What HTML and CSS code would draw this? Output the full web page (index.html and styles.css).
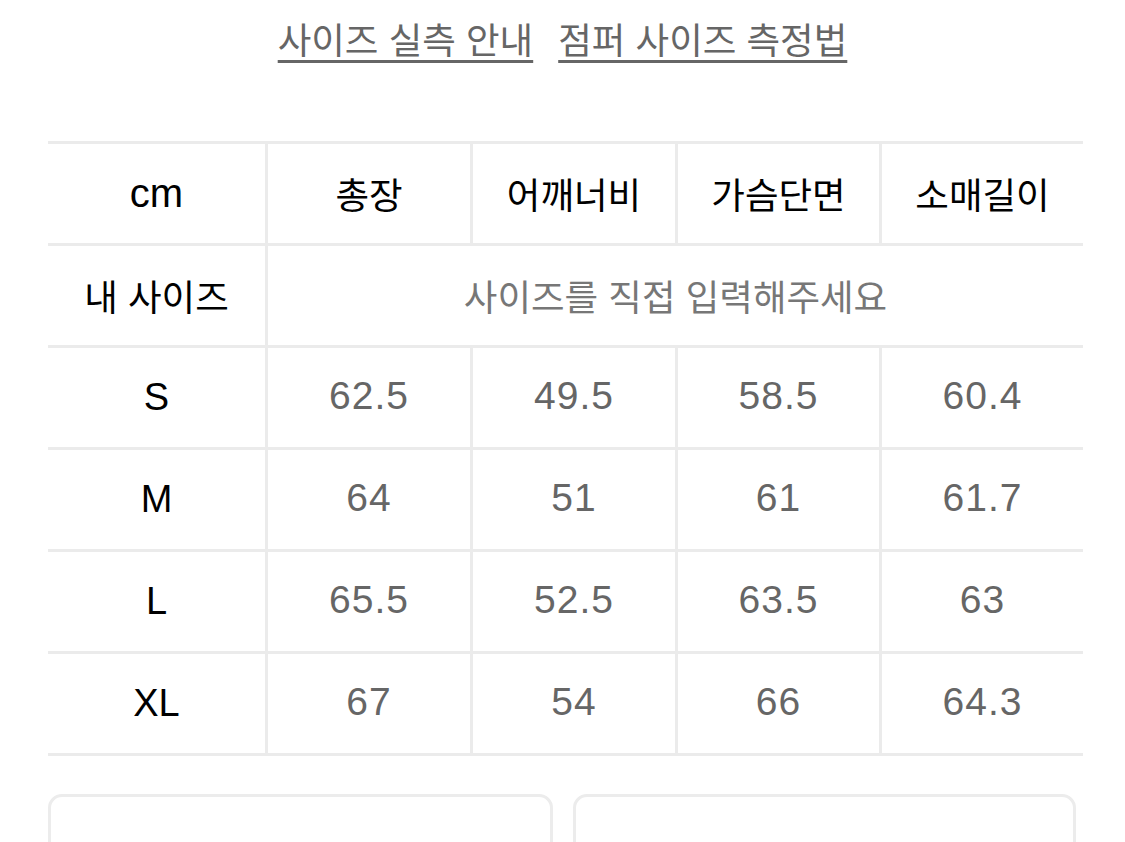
FILE: index.html
```html
<!DOCTYPE html>
<html lang="ko">
<head>
<meta charset="utf-8">
<link rel="stylesheet" href="styles.css">
</head>
<body>
<div class="page">
  <div class="links">
    <a class="link" href="#">사이즈 실측 안내</a>
    <a class="link" href="#">점퍼 사이즈 측정법</a>
  </div>
  <div class="table">
    <div class="cell label en">cm</div>
    <div class="cell head">총장</div>
    <div class="cell head">어깨너비</div>
    <div class="cell head">가슴단면</div>
    <div class="cell head">소매길이</div>

    <div class="cell label">내 사이즈</div>
    <div class="cell span placeholder">사이즈를 직접 입력해주세요</div>

    <div class="cell label en">S</div>
    <div class="cell val">62.5</div>
    <div class="cell val">49.5</div>
    <div class="cell val">58.5</div>
    <div class="cell val">60.4</div>

    <div class="cell label en">M</div>
    <div class="cell val">64</div>
    <div class="cell val">51</div>
    <div class="cell val">61</div>
    <div class="cell val">61.7</div>

    <div class="cell label en">L</div>
    <div class="cell val">65.5</div>
    <div class="cell val">52.5</div>
    <div class="cell val">63.5</div>
    <div class="cell val">63</div>

    <div class="cell label en last">XL</div>
    <div class="cell val last">67</div>
    <div class="cell val last">54</div>
    <div class="cell val last">66</div>
    <div class="cell val last">64.3</div>
  </div>
  <div class="boxes">
    <div class="box"></div>
    <div class="box"></div>
  </div>
</div>
</body>
</html>
```

FILE: styles.css
```css
html, body {
  margin: 0;
  padding: 0;
  background: #fff;
}
body {
  font-family: "Liberation Sans", "Noto Sans CJK KR", sans-serif;
  overflow: hidden;
}
.page {
  width: 1125px;
  height: 842px;
  padding: 0 0 0 48px;
  box-sizing: border-box;
  overflow: hidden;
}
.links {
  display: flex;
  justify-content: center;
  gap: 25px;
  padding-top: 14px;
  height: 141px;
  box-sizing: border-box;
  margin-right: 48px;
}
.link {
  font-family: "Noto Sans CJK KR", sans-serif;
  font-size: 36.5px;
  line-height: 50px;
  height: 50px;
  color: #666;
  text-decoration: underline;
  text-decoration-thickness: 3px;
  text-underline-offset: 6px;
}
.table {
  display: grid;
  grid-template-columns: 217px 205px 205px 204px 204px;
  grid-auto-rows: 102px;
  width: 1035px;
}
.cell {
  display: flex;
  align-items: center;
  justify-content: center;
  border-top: 3px solid #ebebeb;
  border-left: 3px solid #ebebeb;
  box-sizing: border-box;
  color: #666;
  font-size: 39px;
  letter-spacing: 1px;
}
.cell.val {
  padding-bottom: 4px;
}
.cell.label {
  border-left: none;
  color: #000;
  font-family: "Noto Sans CJK KR", sans-serif;
  font-size: 36.5px;
  font-weight: 400;
  letter-spacing: 0;
}
.cell.label.en {
  font-family: "Liberation Sans", sans-serif;
  font-size: 38px;
}
.table > .cell:first-child {
  font-size: 40px;
}
.cell.head {
  color: #000;
  font-family: "Noto Sans CJK KR", sans-serif;
  font-size: 36.5px;
  font-weight: 400;
  letter-spacing: 0;
}
.cell.span {
  grid-column: span 4;
}
.cell.placeholder {
  color: #777;
  font-family: "Noto Sans CJK KR", sans-serif;
  font-size: 36.5px;
  letter-spacing: 0;
}
.cell.last {
  border-bottom: 3px solid #ebebeb;
  height: 105px;
}
.boxes {
  display: flex;
  gap: 20px;
  margin-top: 41px;
}
.box {
  width: 505px;
  height: 80px;
  border: 3px solid #ececec;
  border-radius: 14px;
  box-sizing: border-box;
}
.box + .box {
  width: 503px;
}
```
